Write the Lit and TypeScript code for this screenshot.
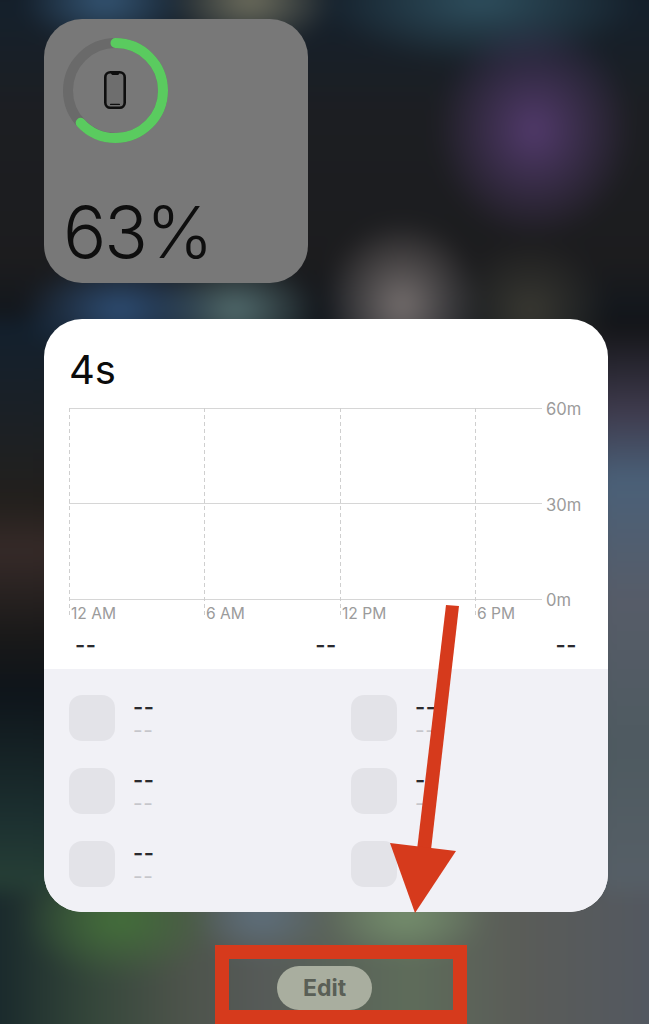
import { LitElement, css, html, svg } from 'lit';
import { customElement } from 'lit/decorators.js';

const gridY = [
  { y: 8, label: '60m', labelY: 15 },
  { y: 103, label: '30m', labelY: 111 },
  { y: 199, label: '0m', labelY: 206 },
];
const gridX = [
  { x: 25, label: '12 AM' },
  { x: 160, label: '6 AM' },
  { x: 296, label: '12 PM' },
  { x: 431, label: '6 PM' },
];

@customElement('app-root')
export class AppRoot extends LitElement {
  static get styles() {
    return css`
      :host {
        display: block;
        font-family: Inter, "Liberation Sans", sans-serif;
      }
      .page {
        position: relative;
        width: 649px;
        height: 1024px;
        overflow: hidden;
        box-sizing: border-box;
        padding: 19px 41px 0 44px;
        background: #17181b;
      }
      /* blurred wallpaper, coordinates are page + 40 because of the bleed */
      .page::before {
        content: '';
        position: absolute;
        inset: -40px;
        filter: blur(10px);
        background:
          radial-gradient(ellipse 100px 110px at 574px 170px, #523a6c, transparent),
          radial-gradient(ellipse 80px 85px at 442px 345px, #77706f, transparent),
          radial-gradient(ellipse 100px 50px at 160px 350px, #2f5078, transparent),
          radial-gradient(ellipse 85px 50px at 275px 350px, #557072, transparent),
          radial-gradient(ellipse 80px 70px at 570px 350px, #3a3932, transparent),
          radial-gradient(ellipse 85px 48px at 145px 40px, #365878, transparent),
          radial-gradient(ellipse 85px 50px at 290px 40px, #737260, transparent),
          radial-gradient(ellipse 160px 65px at 520px 40px, #2f505f, transparent),
          radial-gradient(ellipse 100px 60px at 160px 960px, #44703a, transparent),
          radial-gradient(ellipse 85px 45px at 445px 955px, #76906e, transparent),
          radial-gradient(ellipse 70px 45px at 300px 955px, #5e707e, transparent),
          linear-gradient(90deg, #1a2a2c 40px, #34463a 130px, #4c534a 220px, #565a58 300px, #5e6c5a 450px, #5a5c58 560px, #535860 689px) 0 930px / 729px 174px no-repeat,
          linear-gradient(180deg, #111214 0, #3e3a4c 90px, #4a6078 160px, #565c68 280px, #4e5a60 430px, #586068 600px) 630px 360px / 99px 704px no-repeat,
          linear-gradient(180deg, #12202e 0, #1c2024 110px, #221f1c 180px, #362a28 230px, #181818 320px, #0e141a 370px, #1c3030 500px, #2a4538 590px) 0 360px / 100px 600px no-repeat,
          linear-gradient(180deg, #17181b 0, #14202c 40px, #1c1e22 150px, #1c1c1e 300px, #11161c 360px, #17181b 400px);
      }
      .battery,
      .panel,
      .edit-frame {
        position: relative;
      }
      .battery {
        width: 264px;
        height: 264px;
        box-sizing: border-box;
        padding: 19px 19px 0;
        border-radius: 38px;
        background: #787878;
        color: #0e0e0e;
        display: flex;
        flex-direction: column;
        justify-content: space-between;
      }
      .battery-ring {
        display: block;
      }
      .battery-value {
        font-size: 72px;
        line-height: 72px;
        font-weight: 300;
        letter-spacing: -2px;
        margin: 0 0 15px 0;
      }
      .panel {
        width: 564px;
        height: 593px;
        margin-top: 36px;
        border-radius: 38px;
        background: #fff;
        overflow: hidden;
        display: flex;
        flex-direction: column;
      }
      .total {
        height: 81px;
        box-sizing: border-box;
        padding: 27px 0 0 25px;
        font-size: 40px;
        line-height: 48px;
        color: #0b0b0b;
      }
      .chart {
        display: block;
      }
      .chart text {
        font-family: Inter, "Liberation Sans", sans-serif;
        font-size: 15.6px;
        fill: #9b9b9b;
      }
      .chart .axis {
        font-size: 16.6px;
      }
      .chart .hline {
        stroke: #d6d6d6;
        stroke-width: 1;
      }
      .chart .vline {
        stroke: #cfcfcf;
        stroke-width: 1;
        stroke-dasharray: 4 3;
      }
      .averages {
        height: 39px;
        display: flex;
        justify-content: space-between;
        align-items: center;
        padding: 0 31px 10px 31px;
        box-sizing: border-box;
      }
      .dash {
        font-size: 22px;
        line-height: 20px;
        font-weight: 600;
        color: #2a2a2e;
        letter-spacing: 0.5px;
      }
      .apps {
        flex: 1;
        background: #f1f1f6;
        box-sizing: border-box;
        padding: 26px 25px 0;
        display: grid;
        grid-template-columns: 282px 1fr;
        grid-auto-rows: 46px;
        row-gap: 27px;
      }
      .app {
        display: flex;
        gap: 18px;
      }
      .app-icon {
        width: 46px;
        height: 46px;
        border-radius: 13px;
        background: #e3e3e8;
      }
      .app-text {
        display: flex;
        flex-direction: column;
        gap: 4px;
        padding-top: 2px;
      }
      .sub {
        font-size: 21px;
        line-height: 20px;
        font-weight: 400;
        color: #c6c6cb;
        letter-spacing: 0.5px;
      }
      .edit-frame {
        width: 252px;
        height: 79px;
        box-sizing: border-box;
        margin: 33px 0 0 171px;
        border: 14px solid #d63a1c;
        padding-left: 48px;
        display: flex;
        align-items: flex-end;
      }
      .edit {
        width: 95px;
        height: 44px;
        border-radius: 22px;
        background: #a9ae9f;
        color: #5a5f56;
        font-size: 23px;
        font-weight: 700;
        display: flex;
        align-items: center;
        justify-content: center;
      }
      .arrow {
        position: absolute;
        left: 0;
        top: 0;
      }
    `;
  }

  renderChart() {
    return html`
      <svg class="chart" width="564" height="230" viewBox="0 0 564 230">
        ${gridY.map(
          (g) => svg`
            <line class="hline" x1="25" x2="498" y1=${g.y + 0.5} y2=${g.y + 0.5}></line>
            <text class="axis" x="502" y=${g.labelY}>${g.label}</text>
          `
        )}
        ${gridX.map(
          (g) => svg`
            <line class="vline" x1=${g.x + 0.5} x2=${g.x + 0.5} y1="8" y2="218"></line>
            <text x=${g.x + 2} y="219">${g.label}</text>
          `
        )}
      </svg>
    `;
  }

  renderApp() {
    return html`
      <div class="app">
        <div class="app-icon"></div>
        <div class="app-text">
          <span class="dash">--</span>
          <span class="sub">--</span>
        </div>
      </div>
    `;
  }

  render() {
    return html`
      <div class="page">
        <div class="battery">
          <svg class="battery-ring" width="106" height="106" viewBox="0 0 106 106">
            <circle cx="52.5" cy="52.5" r="47.5" fill="none" stroke="#6a6a6a" stroke-width="10"></circle>
            <circle cx="52.5" cy="52.5" r="47.5" fill="none" stroke="#5acb5f" stroke-width="10" stroke-linecap="round"
              stroke-dasharray="188 298.5" transform="rotate(-90 52.5 52.5)"></circle>
            <rect x="42.3" y="34.3" width="19.4" height="35.4" rx="5" fill="#6e6e6e" stroke="#0e0e0e" stroke-width="2.6"></rect>
            <path d="M47.5 34.5h9l-.6 1.8a1.2 1.2 0 0 1-1.1.8h-5.2a1.2 1.2 0 0 1-1.1-.8z" fill="#0e0e0e"></path>
            <rect x="47" y="65.8" width="10" height="1.2" rx=".6" fill="#0e0e0e"></rect>
          </svg>
          <div class="battery-value">63%</div>
        </div>

        <div class="panel">
          <div class="total">4s</div>
          ${this.renderChart()}
          <div class="averages">
            <span class="dash">--</span>
            <span class="dash">--</span>
            <span class="dash">--</span>
          </div>
          <div class="apps">
            ${[0, 1, 2, 3, 4, 5].map(() => this.renderApp())}
          </div>
        </div>

        <div class="edit-frame">
          <div class="edit">Edit</div>
        </div>

        <svg class="arrow" width="649" height="1024" viewBox="0 0 649 1024">
          <polygon points="446,605 459,606 431,850 417,850" fill="#d63a1c"></polygon>
          <polygon points="390,843 456,851 415,913" fill="#d63a1c"></polygon>
        </svg>
      </div>
    `;
  }
}
